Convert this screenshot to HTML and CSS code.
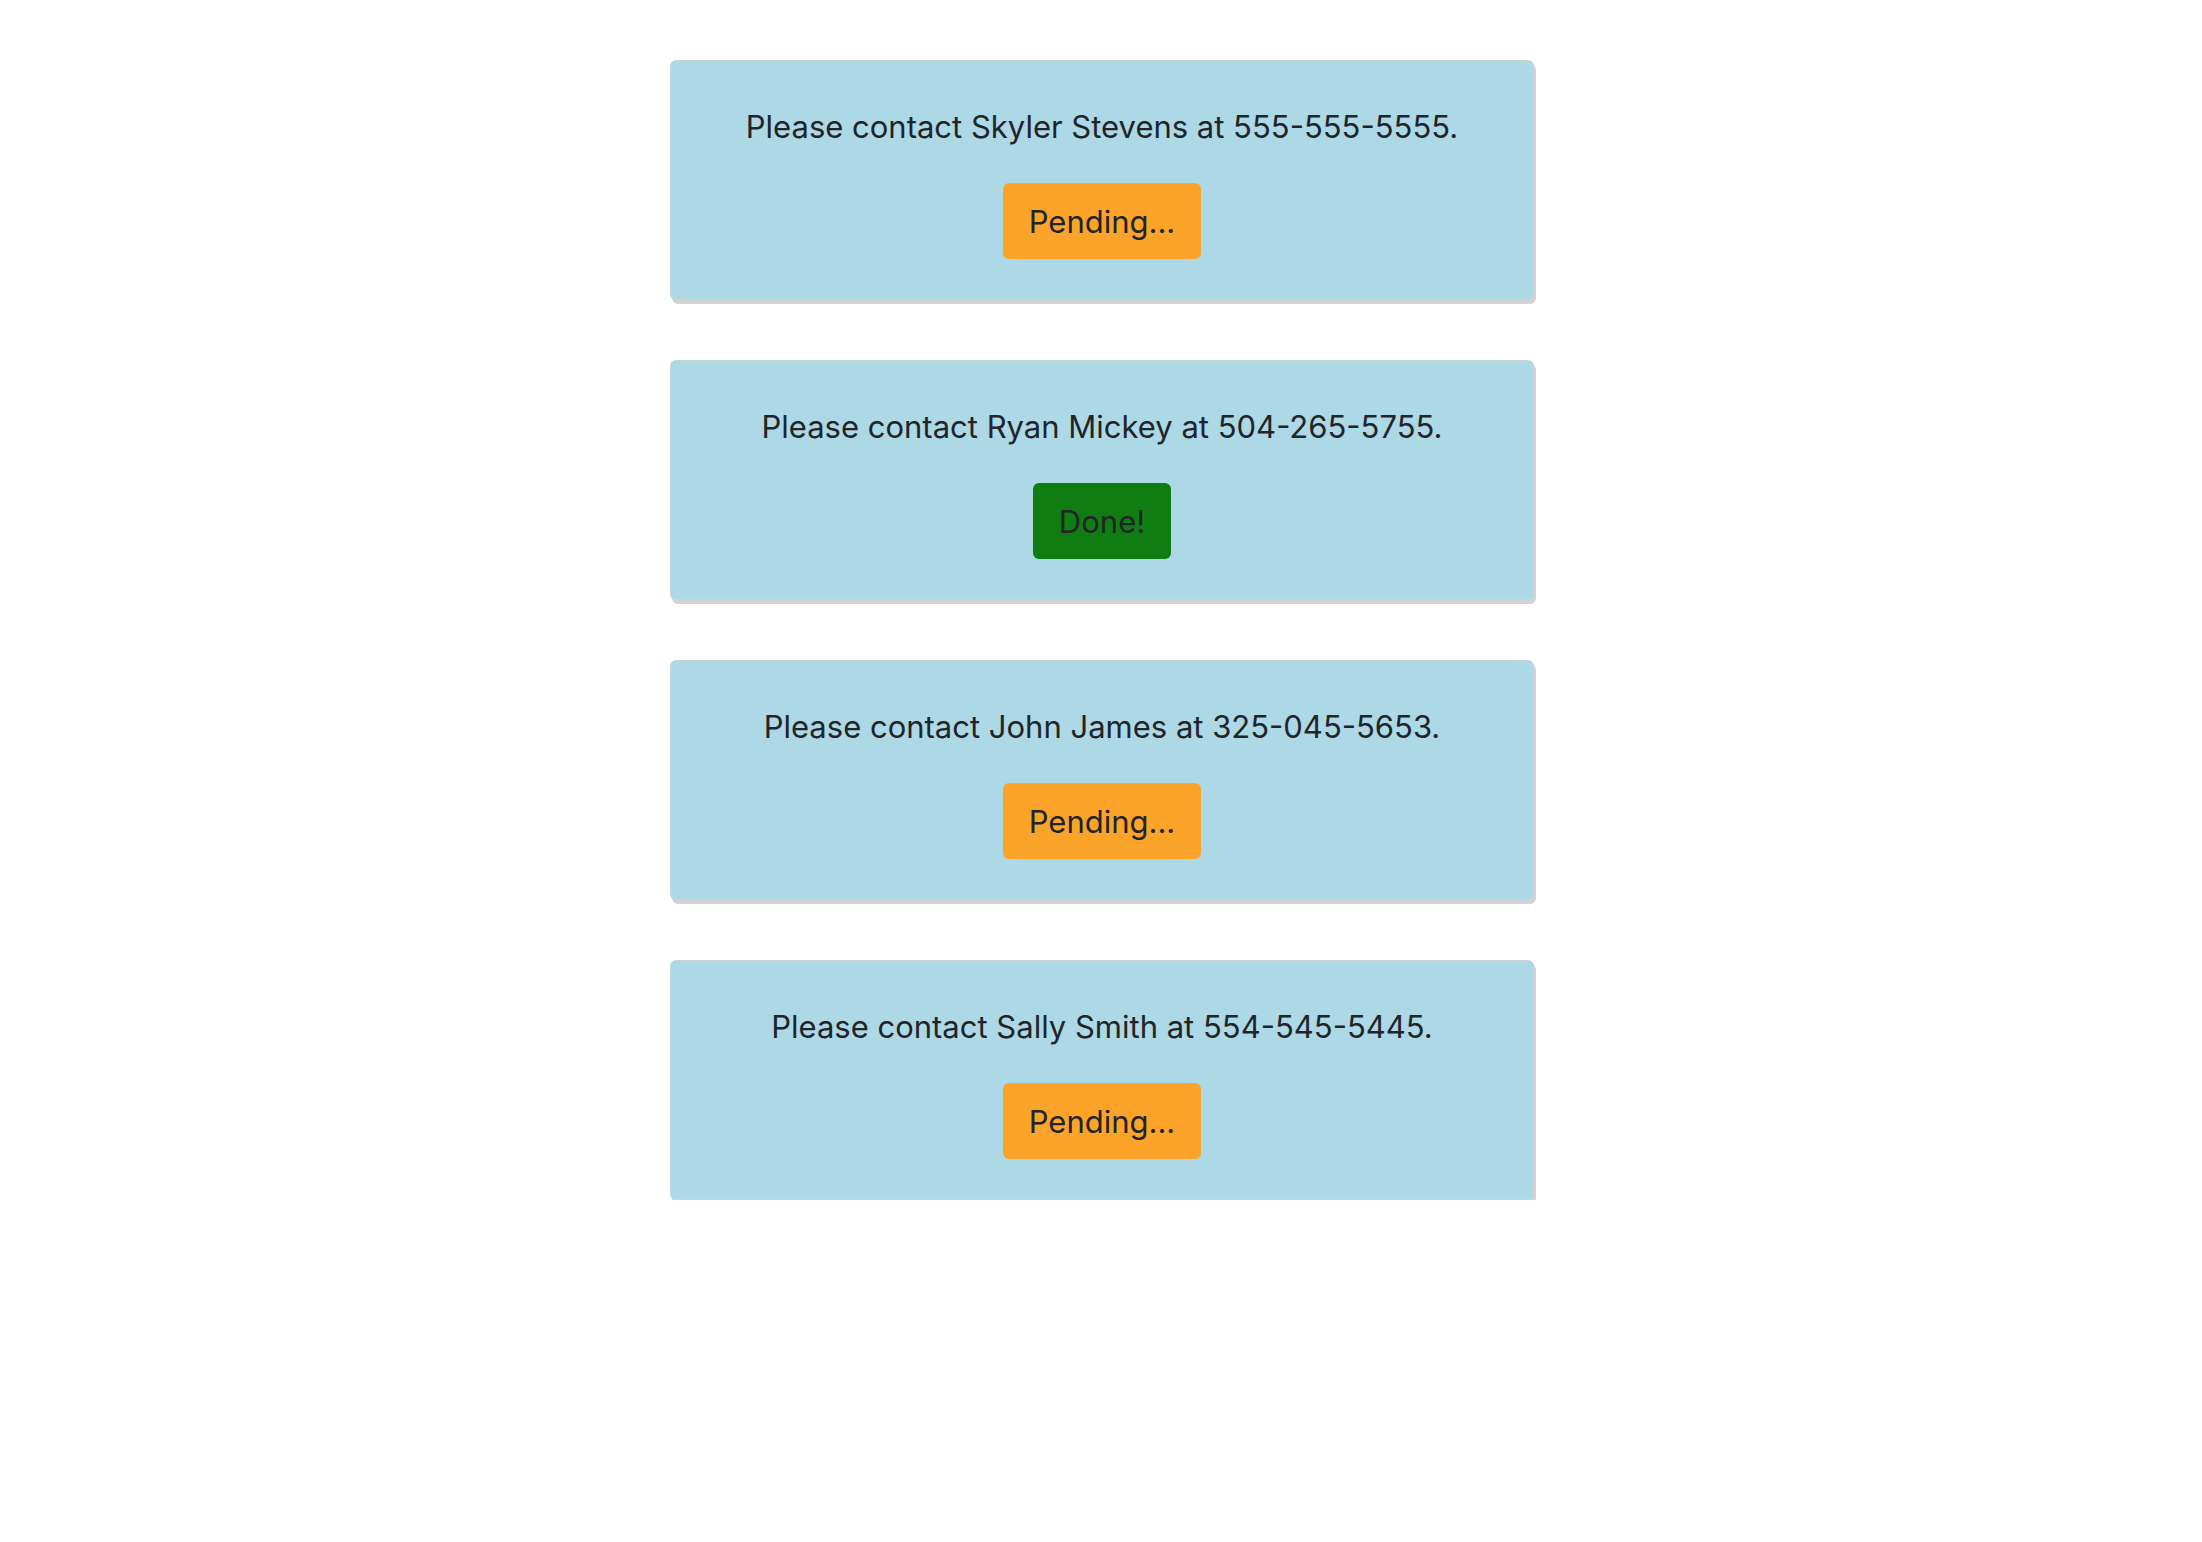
FILE: index.html
```html
<!DOCTYPE html>
<html lang="en">
<head>
<meta charset="utf-8">
<title>Contacts</title>
<link rel="stylesheet" href="styles.css">
</head>
<body>
<main class="list">
  <section class="card">
    <p class="message">Please contact Skyler Stevens at 555-555-5555.</p>
    <button class="status status-pending">Pending...</button>
  </section>
  <section class="card">
    <p class="message">Please contact Ryan Mickey at 504-265-5755.</p>
    <button class="status status-done">Done!</button>
  </section>
  <section class="card">
    <p class="message">Please contact John James at 325-045-5653.</p>
    <button class="status status-pending">Pending...</button>
  </section>
  <section class="card">
    <p class="message">Please contact Sally Smith at 554-545-5445.</p>
    <button class="status status-pending">Pending...</button>
  </section>
</main>
</body>
</html>
```

FILE: styles.css
```css
html, body {
  margin: 0;
  padding: 0;
  background: #ffffff;
}

body {
  font-family: Inter, "Noto Sans", "Liberation Sans", sans-serif;
  color: #212529;
}

.list {
  display: flex;
  flex-direction: column;
  align-items: center;
  gap: 60px;
  padding: 60px 0 0 2px;
}

.card {
  box-sizing: border-box;
  width: 864px;
  height: 240px;
  padding: 43px 20px 0;
  background: #add8e6;
  border: 1px dotted #cfd6d9;
  border-radius: 6px;
  box-shadow: 2px 4px 0 #d3d3d3;
  display: flex;
  flex-direction: column;
  align-items: center;
}

.message {
  margin: 0 0 34px;
  font-size: 31px;
  line-height: 45px;
  text-align: center;
}

.status {
  box-sizing: border-box;
  height: 76px;
  padding: 0 26px;
  font-family: inherit;
  font-size: 31px;
  line-height: 45px;
  color: #212529;
  border: none;
  border-radius: 6px;
}

.status-pending {
  background: #fca42a;
}

.status-done {
  background: #0f7d12;
}
```
